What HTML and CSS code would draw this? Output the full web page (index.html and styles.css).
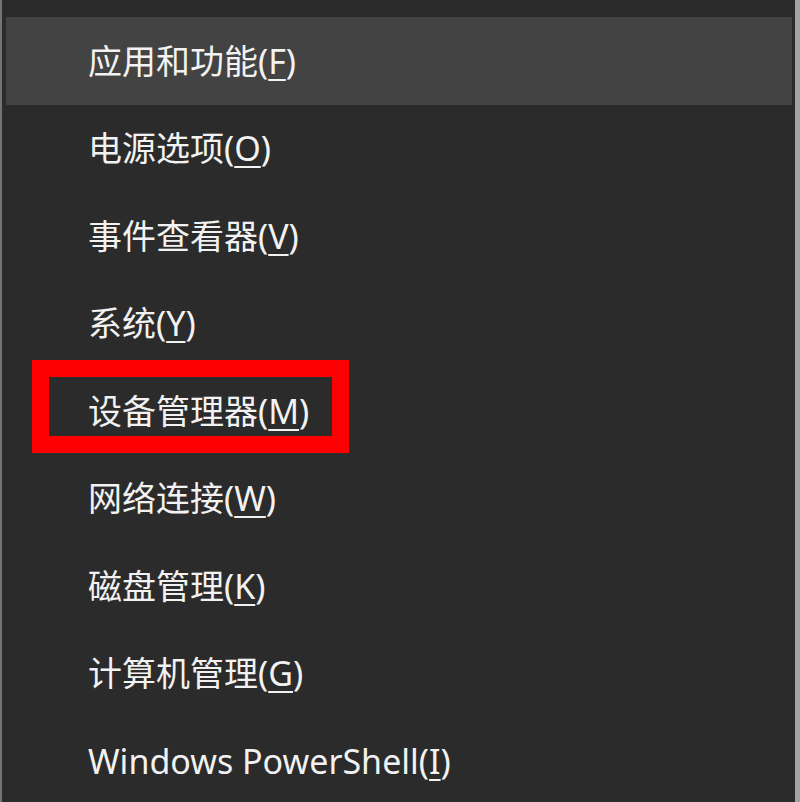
FILE: index.html
```html
<!DOCTYPE html>
<html lang="zh-CN">
<head>
<meta charset="utf-8">
<title>快速链接菜单</title>
<link rel="stylesheet" href="styles.css">
</head>
<body>
<div class="menu">
  <ul class="list">
    <li class="item is-hover"><span class="label">应用和功能(<u>F</u>)</span></li>
    <li class="item"><span class="label">电源选项(<u>O</u>)</span></li>
    <li class="item"><span class="label">事件查看器(<u>V</u>)</span></li>
    <li class="item"><span class="label">系统(<u>Y</u>)</span></li>
    <li class="item is-marked"><span class="label">设备管理器(<u>M</u>)</span><span class="mark"></span></li>
    <li class="item"><span class="label">网络连接(<u>W</u>)</span></li>
    <li class="item"><span class="label">磁盘管理(<u>K</u>)</span></li>
    <li class="item"><span class="label">计算机管理(<u>G</u>)</span></li>
    <li class="item"><span class="label">Windows PowerShell(<u>I</u>)</span></li>
  </ul>
</div>
</body>
</html>
```

FILE: styles.css
```css
html, body {
  margin: 0;
  padding: 0;
  height: 100%;
  overflow: hidden;
  background: #2b2b2b;
}

.menu {
  box-sizing: border-box;
  width: 800px;
  height: 802px;
  background: #2b2b2b;
  border-left: 2px solid #737373;
  border-right: 5px solid #a3a3a3;
  padding: 17px 3px 0 4px;
  overflow: hidden;
  font-family: "Noto Sans", "Noto Sans CJK SC", sans-serif;
  color: #f2f2f2;
}

.list {
  list-style: none;
  margin: 0;
  padding: 0;
}

.item {
  position: relative;
  height: 87.5px;
  display: flex;
  align-items: center;
  padding-left: 82px;
  font-size: 34px;
  line-height: 1;
}

.item.is-hover {
  background: #434343;
}

.label u {
  text-decoration: underline;
  text-decoration-thickness: 2px;
  text-underline-offset: 5px;
}

.mark {
  position: absolute;
  left: 26px;
  top: -7px;
  width: 317px;
  height: 93px;
  box-sizing: border-box;
  border: 17px solid #ff0000;
}
```
